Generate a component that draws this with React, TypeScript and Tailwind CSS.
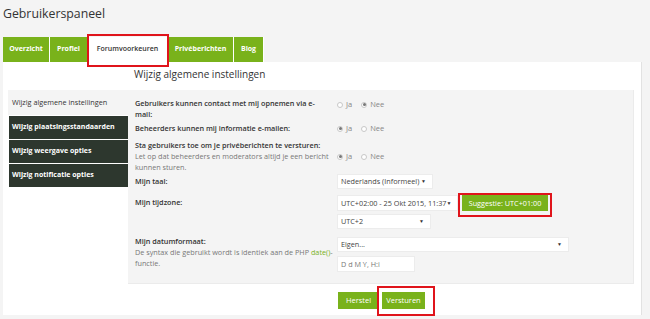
import React from "react";

function Radio({ checked }: { checked: boolean }) {
  return (
    <span className="inline-flex items-center justify-center w-[6px] h-[6px] rounded-full border border-[#c8c8c8] bg-white">
      {checked && <span className="w-[3px] h-[3px] rounded-full bg-[#777]" />}
    </span>
  );
}

function YesNo({ yes }: { yes: boolean }) {
  return (
    <div className="flex items-center text-[7.5px] leading-[11px] text-[#888]">
      <Radio checked={yes} />
      <span className="ml-[3px] mr-[9px]">Ja</span>
      <Radio checked={!yes} />
      <span className="ml-[3px]">Nee</span>
    </div>
  );
}

function Select({ w, h, label }: { w: string; h: string; label: string }) {
  return (
    <div className={`${w} ${h} bg-white border border-[#ececec] flex items-center justify-between pl-[3px] pr-[6px] text-[7.25px] text-[#444] whitespace-nowrap`}>
      <span>{label}</span>
      <span className="text-[5px] text-[#333]">▼</span>
    </div>
  );
}

export default function App() {
  const tabs = [
    { t: "Overzicht", w: "w-[47px]" },
    { t: "Profiel", w: "w-[38px]" },
    { t: "Forumvoorkeuren", w: "w-[80px]", active: true },
    { t: "Privéberichten", w: "w-[66px]" },
    { t: "Blog", w: "w-[30px]" },
  ];
  return (
    <div className="relative w-[650px] h-[319px] overflow-hidden bg-[#f4f4f4] text-[#333] font-['Open_Sans',sans-serif]">
      <div className="pl-[3px] pt-[5px] h-[37px] text-[12.3px] leading-[18px] text-[#333]">Gebruikerspaneel</div>
      <div className="flex ml-[3px] h-[25px]">
        {tabs.map((t) => (
          <div
            key={t.t}
            className={`${t.w} h-full flex items-center justify-center border-r border-white text-[7px] whitespace-nowrap ${
              t.active ? "bg-white text-[#333] font-semibold" : "bg-[#79b21b] text-white font-bold"
            }`}
          >
            {t.t}
          </div>
        ))}
      </div>
      <div className="ml-[3px] w-[639px] h-[253px] bg-white border-r border-[#e2e2e2]">
        <div className="h-[28px] pl-[131px] pt-[5px] text-[10px] leading-[15px] text-[#333]">Wijzig algemene instellingen</div>
        <div className="flex ml-[5px]">
          <div className="w-[120px]">
            <div className="h-[25px] bg-[#f4f4f4] pl-[4px] flex items-center text-[7.25px] text-[#333] whitespace-nowrap">Wijzig algemene instellingen</div>
            {["Wijzig plaatsingsstandaarden", "Wijzig weergave opties", "Wijzig notificatie opties"].map((s) => (
              <div key={s} className="mt-[1px] ml-[1px] h-[23px] bg-[#2d372e] pl-[3px] flex items-center text-[7px] font-bold text-white whitespace-nowrap">
                {s}
              </div>
            ))}
          </div>
          <div className="w-[506px] h-[194px] bg-[#f4f4f4] border-r border-b border-[#ebebeb] pl-[7px] text-[7.25px] leading-[11px]">
            <div className="flex mt-[8px]">
              <div className="w-[202px] pr-[16px] font-semibold text-[#333]">Gebruikers kunnen contact met mij opnemen via e-mail:</div>
              <div className="pt-[1px]"><YesNo yes={false} /></div>
            </div>
            <div className="flex mt-[3px]">
              <div className="w-[202px] pr-[8px] font-semibold text-[#333] whitespace-nowrap">Beheerders kunnen mij informatie e-mailen:</div>
              <YesNo yes={true} />
            </div>
            <div className="flex mt-[6px]">
              <div className="w-[202px] pr-[6px]">
                <div className="font-semibold text-[#333] whitespace-nowrap">Sta gebruikers toe om je privéberichten te versturen:</div>
                <div className="text-[#777]">Let op dat beheerders en moderators altijd je een bericht kunnen sturen.</div>
              </div>
              <YesNo yes={true} />
            </div>
            <div className="flex items-center mt-[1px]">
              <div className="w-[202px] font-semibold text-[#333]">Mijn taal:</div>
              <Select w="w-[96px]" h="h-[15px]" label="Nederlands (Informeel)" />
            </div>
            <div className="flex mt-[6px]">
              <div className="w-[202px] font-semibold text-[#333] pt-[2px]">Mijn tijdzone:</div>
              <div>
                <div className="flex">
                  <Select w="w-[121px]" h="h-[16px]" label="UTC+02:00 - 25 Okt 2015, 11:37" />
                  <div className="ml-[4px] w-[86px] h-[16px] bg-[#79b21b] text-white flex items-center justify-center whitespace-nowrap">Suggestie: UTC+01:00</div>
                </div>
                <div className="mt-[3px]">
                  <Select w="w-[94px]" h="h-[15px]" label="UTC+2" />
                </div>
              </div>
            </div>
            <div className="flex mt-[8px]">
              <div className="w-[202px] -mt-[1px] pr-[4px]">
                <div className="font-semibold text-[#333]">Mijn datumformaat:</div>
                <div className="text-[#777]">
                  De syntax die gebruikt wordt is identiek aan de PHP <span className="text-[#79b21b]">date()</span>-functie.
                </div>
              </div>
              <div>
                <Select w="w-[232px]" h="h-[15px]" label="Eigen..." />
                <div className="mt-[4px] w-[78px] h-[16px] bg-white border border-[#ececec] flex items-center pl-[3px] text-[#777]">D d M Y, H:i</div>
              </div>
            </div>
          </div>
        </div>
        <div className="flex ml-[335px] mt-[8px] gap-[3px] text-[7.5px] text-white">
          <div className="w-[41px] h-[17px] bg-[#79b21b] flex items-center justify-center">Herstel</div>
          <div className="w-[43px] h-[17px] bg-[#79b21b] flex items-center justify-center">Versturen</div>
        </div>
      </div>
      <div className="absolute left-[87px] top-[34px] w-[82px] h-[33px] border-2 border-[#e0141b]" />
      <div className="absolute left-[458px] top-[193px] w-[94px] h-[24px] border-2 border-[#e0141b]" />
      <div className="absolute left-[377px] top-[286px] w-[58px] h-[30px] border-2 border-[#e0141b]" />
    </div>
  );
}
